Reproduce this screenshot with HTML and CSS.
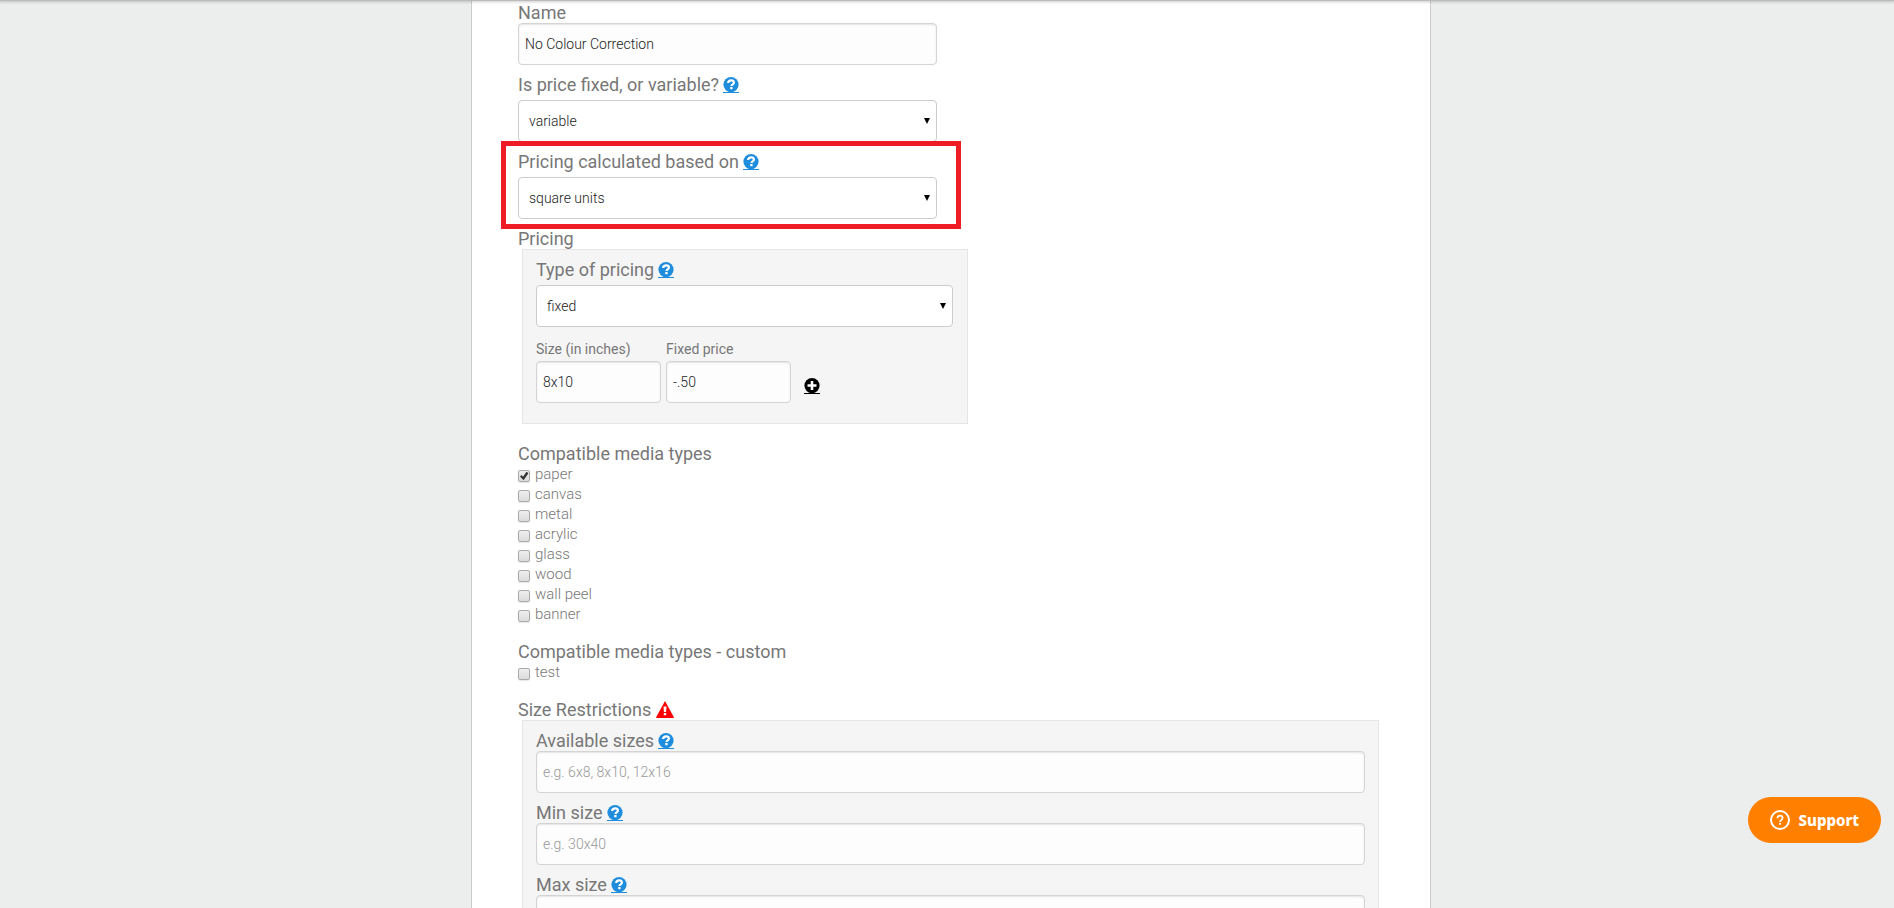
FILE: index.html
```html
<!DOCTYPE html>
<html lang="en">
<head>
    <meta charset="UTF-8">
    <meta name="viewport" content="width=device-width, initial-scale=1.0">
    <title>Edit Option</title>
    <link rel="stylesheet" href="styles.css">
</head>
<body>
    <svg class="sprite" aria-hidden="true">
        <symbol id="icon-help" viewBox="0 0 16 16">
            <circle cx="8" cy="7.6" r="7.6" fill="currentColor"/>
            <path d="M5.1 6C5.3 4.2 6.4 3.3 8.1 3.3s2.8.9 2.8 2.3c0 1.9-2.4 1.8-2.4 3.4" fill="none" stroke="#fff" stroke-width="2.2"/>
            <rect x="7.2" y="10" width="2.4" height="2.2" fill="#fff"/>
            <rect x="0" y="15" width="16" height="1" fill="currentColor"/>
        </symbol>
        <symbol id="icon-plus" viewBox="0 0 16 16">
            <circle cx="8" cy="7.6" r="7.6" fill="currentColor"/>
            <path d="M8 3v9M3.5 7.5h9" stroke="#fff" stroke-width="2.6"/>
            <rect x="0" y="15" width="16" height="1" fill="currentColor"/>
        </symbol>
        <symbol id="icon-warning" viewBox="0 0 18 17">
            <path d="M9 0 17.9 16.2Q18 17 17.2 17H.8Q0 17 .1 16.2Z" fill="currentColor"/>
            <path d="M7.5 5.5h3l-.4 5.5H7.9zM7.8 12h2.4v2.3H7.8z" fill="#fff"/>
        </symbol>
    </svg>

    <div class="topbar"></div>

    <main class="panel">
        <form>
            <div class="field narrow">
                <label for="name">Name</label>
                <input type="text" id="name" value="No Colour Correction">
            </div>

            <div class="field narrow">
                <div class="label-row">
                    <label for="price-mode">Is price fixed, or variable?</label>
                    <a href="#" class="help" aria-label="Help"><svg><use href="#icon-help"/></svg></a>
                </div>
                <div class="select">
                    <select id="price-mode"><option>variable</option><option>fixed</option></select>
                </div>
            </div>

            <div class="field narrow highlight">
                <div class="label-row">
                    <label for="price-base">Pricing calculated based on</label>
                    <a href="#" class="help" aria-label="Help"><svg><use href="#icon-help"/></svg></a>
                </div>
                <div class="select">
                    <select id="price-base"><option>square units</option></select>
                </div>
            </div>

            <h3>Pricing</h3>
            <div class="box pricing">
                <div class="field">
                    <div class="label-row">
                        <label for="price-type">Type of pricing</label>
                        <a href="#" class="help" aria-label="Help"><svg><use href="#icon-help"/></svg></a>
                    </div>
                    <div class="select">
                        <select id="price-type"><option>fixed</option></select>
                    </div>
                </div>
                <div class="price-row">
                    <div class="small-field">
                        <label for="size">Size (in inches)</label>
                        <input type="text" id="size" value="8x10">
                    </div>
                    <div class="small-field">
                        <label for="price">Fixed price</label>
                        <input type="text" id="price" value="-.50">
                    </div>
                    <a href="#" class="add" aria-label="Add price"><svg><use href="#icon-plus"/></svg></a>
                </div>
            </div>

            <h3>Compatible media types</h3>
            <ul class="checks">
                <li><label><input type="checkbox" checked>paper</label></li>
                <li><label><input type="checkbox">canvas</label></li>
                <li><label><input type="checkbox">metal</label></li>
                <li><label><input type="checkbox">acrylic</label></li>
                <li><label><input type="checkbox">glass</label></li>
                <li><label><input type="checkbox">wood</label></li>
                <li><label><input type="checkbox">wall peel</label></li>
                <li><label><input type="checkbox">banner</label></li>
            </ul>

            <h3>Compatible media types - custom</h3>
            <ul class="checks">
                <li><label><input type="checkbox">test</label></li>
            </ul>

            <h3>Size Restrictions <svg class="warning"><use href="#icon-warning"/></svg></h3>
            <div class="box">
                <div class="field">
                    <div class="label-row">
                        <label for="sizes">Available sizes</label>
                        <a href="#" class="help" aria-label="Help"><svg><use href="#icon-help"/></svg></a>
                    </div>
                    <input type="text" id="sizes" placeholder="e.g. 6x8, 8x10, 12x16">
                </div>
                <div class="field">
                    <div class="label-row">
                        <label for="min-size">Min size</label>
                        <a href="#" class="help" aria-label="Help"><svg><use href="#icon-help"/></svg></a>
                    </div>
                    <input type="text" id="min-size" placeholder="e.g. 30x40">
                </div>
                <div class="field">
                    <div class="label-row">
                        <label for="max-size">Max size</label>
                        <a href="#" class="help" aria-label="Help"><svg><use href="#icon-help"/></svg></a>
                    </div>
                    <input type="text" id="max-size">
                </div>
            </div>
        </form>
    </main>

    <button type="button" class="support">
        <svg viewBox="0 0 20 20" aria-hidden="true">
            <circle cx="10" cy="10" r="9" fill="none" stroke="#fff" stroke-width="2"/>
            <path d="M7.4 8.2C7.4 6.5 8.5 5.7 10 5.7s2.6.9 2.6 2.3c0 1.8-2.5 2-2.5 3.9" fill="none" stroke="#fff" stroke-width="1.7"/>
            <rect x="9.2" y="13" width="1.8" height="1.8" fill="#fff"/>
        </svg>
        Support
    </button>
</body>
</html>
```
FILE: styles.css
```css
* {
    box-sizing: border-box;
}

body {
    margin: 0;
    height: 100vh;
    overflow: hidden;
    padding-left: 8px;
    background-color: #eceeed;
    color: #777;
    font-family: Roboto, "Liberation Sans", sans-serif;
    font-size: 18px;
    line-height: 21px;
}

.sprite {
    position: absolute;
    width: 0;
    height: 0;
}

/* bottom edge of the fixed header */
.topbar {
    position: fixed;
    top: 0;
    left: 0;
    right: 0;
    height: 1px;
    background-color: #bbb;
    box-shadow: 0 0 3px 1px rgba(0, 0, 0, 0.2);
    z-index: 5;
}

.panel {
    max-width: 960px;
    min-height: 100vh;
    margin: 0 auto;
    padding: 2px 51px 40px 46px;
    background-color: #fff;
    border: solid #ccc;
    border-width: 0 1px;
}

h3 {
    margin: 0;
    font-size: 18px;
    font-weight: 400;
}

.field {
    margin-bottom: 9px;
}

.field label {
    display: block;
}

.narrow {
    max-width: 419px;
}

.label-row {
    display: flex;
    gap: 4px;
}

input[type="text"],
select {
    display: block;
    width: 100%;
    height: 42px;
    border: 1px solid #ccc;
    border-radius: 4px;
    background-color: #fff;
    color: #222;
    font-family: inherit;
    font-size: 14px;
    font-weight: 300;
}

input[type="text"] {
    padding: 0 6px;
    border-color: #d4d4d4;
    background-color: #fdfdfd;
    box-shadow: inset 0 1px 2px rgba(0, 0, 0, 0.1);
}

input::placeholder {
    color: #999;
}

select {
    appearance: none;
    padding: 0 20px 0 10px;
}

.select {
    position: relative;
    margin-top: 5px;
}

.select::after {
    content: "";
    position: absolute;
    right: 7px;
    top: 18px;
    border: solid transparent;
    border-width: 6px 3px 0;
    border-top-color: #000;
}

.help {
    height: 21px;
    color: #1f8ddd;
}

.help svg,
.add svg {
    display: block;
    width: 16px;
    height: 16px;
}

.help svg {
    margin-top: 3px;
}

/* red frame round the setting being explained */
.highlight {
    position: relative;
}

.highlight::before {
    content: "";
    position: absolute;
    top: -10px;
    right: -24px;
    bottom: -10px;
    left: -17px;
    border: 5px solid #ee1c24;
    pointer-events: none;
}

.box {
    margin-left: 4px;
    padding: 9px 13px;
    border: 1px solid #e5e5e5;
    background-color: #f5f5f5;
}

.pricing {
    max-width: 446px;
    margin-bottom: 19px;
    padding-right: 14px;
    padding-bottom: 20px;
}

.price-row {
    display: flex;
    align-items: flex-end;
    gap: 5px;
    margin-top: 14px;
}

.small-field {
    width: 125px;
    font-size: 14px;
    line-height: 17px;
}

.small-field label {
    display: block;
    margin-bottom: 3px;
}

.add {
    margin: 0 0 9px 8px;
    color: #000;
}

.checks {
    list-style: none;
    margin: 0 0 17px;
    padding: 0;
    font-size: 15px;
    font-weight: 300;
    line-height: 20px;
}

.checks label {
    display: flex;
    align-items: flex-start;
    gap: 5px;
}

.checks input {
    appearance: none;
    width: 12px;
    height: 12px;
    margin: 6px 0 0;
    border: 1px solid #aaa;
    border-radius: 2px;
    background-image: linear-gradient(#eee, #dcdcdc);
    box-shadow: 0 1px 1px rgba(0, 0, 0, 0.1);
}

.checks input:checked::after {
    content: "";
    display: block;
    height: 10px;
    background-color: #333;
    clip-path: polygon(10% 55%, 25% 40%, 40% 58%, 75% 8%, 95% 22%, 45% 92%);
}

.warning {
    width: 18px;
    height: 17px;
    color: #f00;
    vertical-align: -2px;
}

.support {
    position: fixed;
    right: 13px;
    bottom: 65px;
    display: flex;
    align-items: center;
    gap: 9px;
    height: 46px;
    padding: 0 22px;
    border: 0;
    border-radius: 23px;
    background-color: #ff7f00;
    color: #fff;
    font-family: "Noto Sans", "Open Sans", sans-serif;
    font-size: 15px;
    font-weight: 800;
}

.support svg {
    width: 20px;
    height: 20px;
}
```
